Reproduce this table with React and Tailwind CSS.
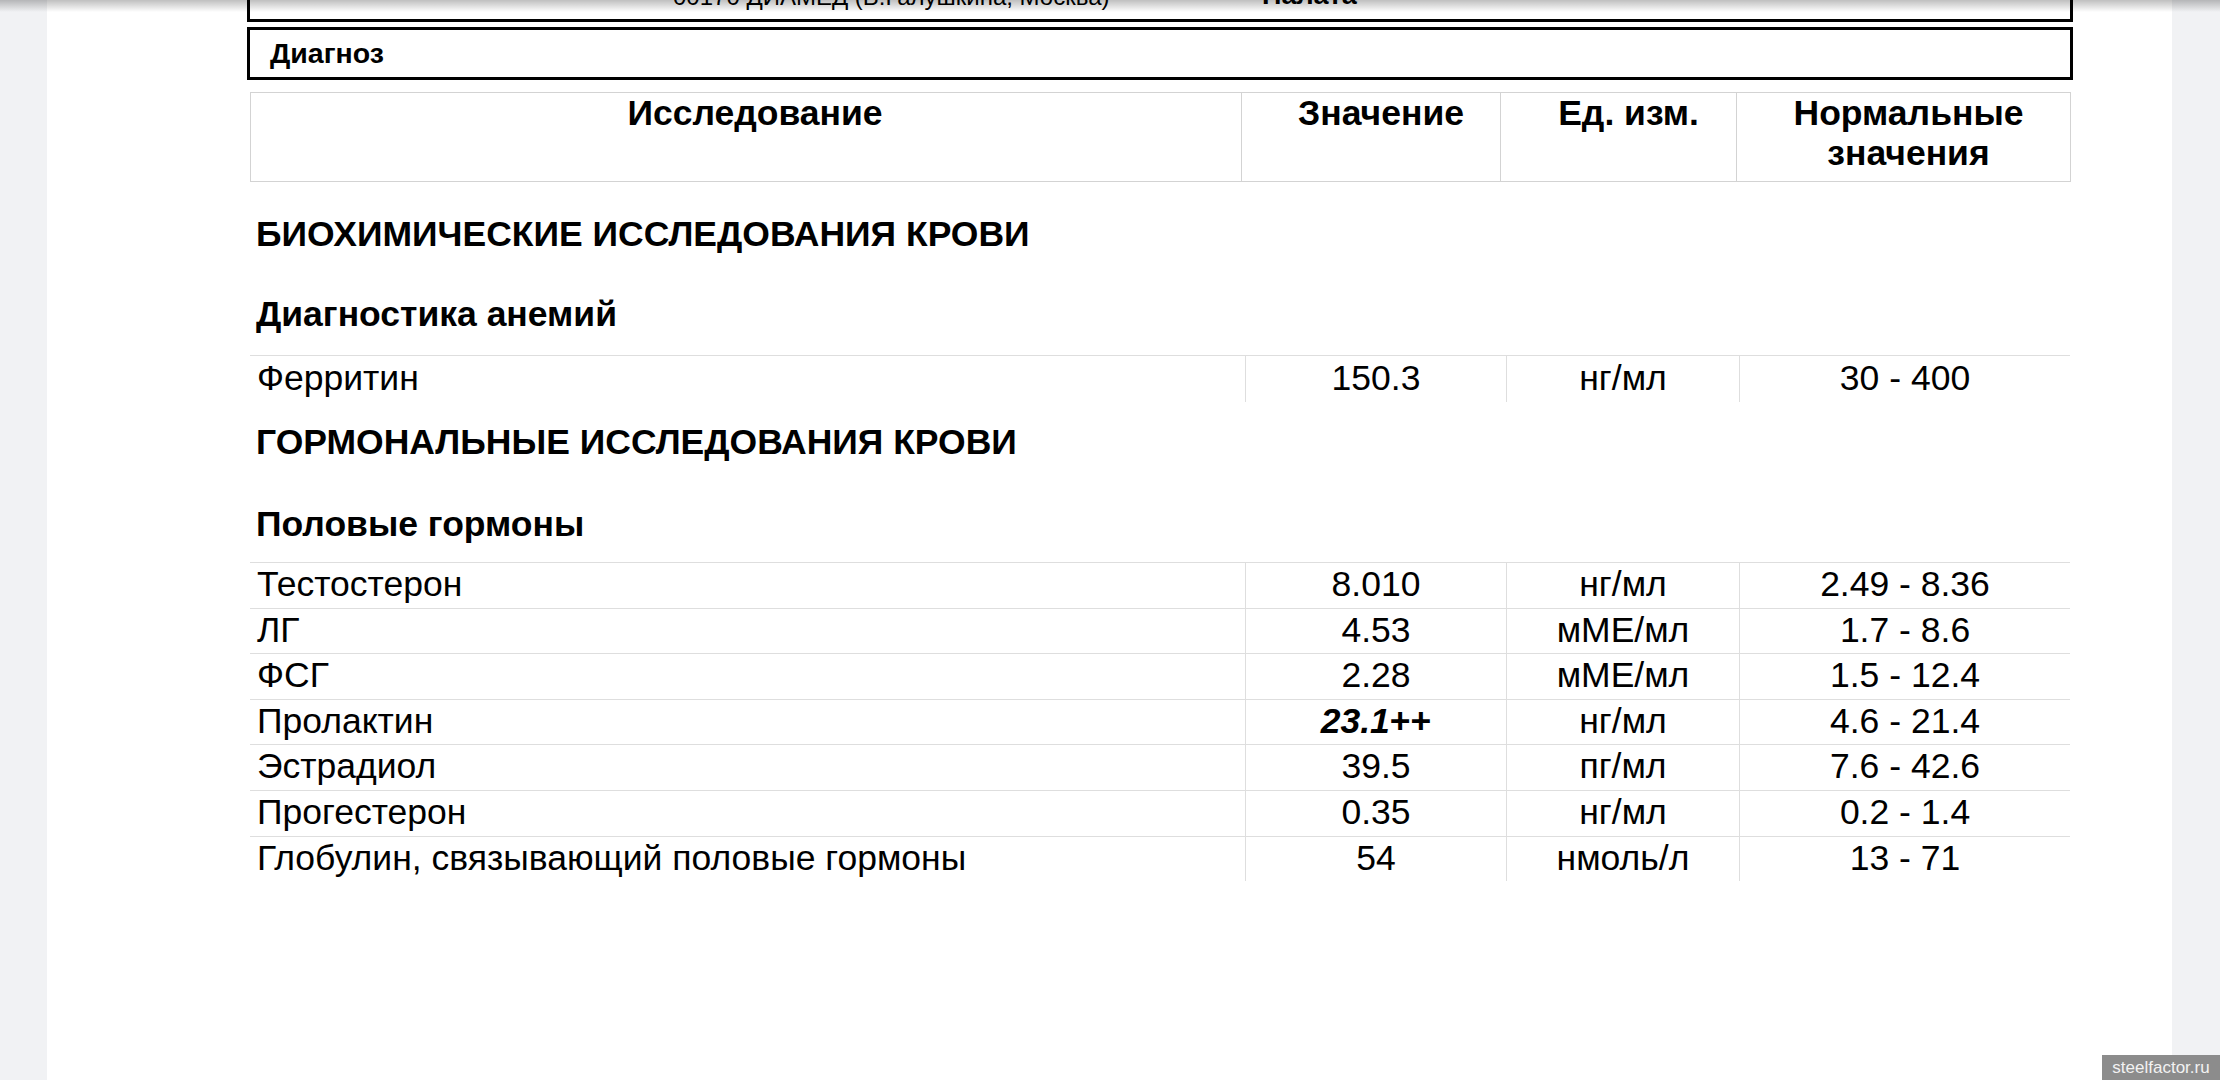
import React from 'react'

const FONT = "font-['Liberation_Sans',Arial,sans-serif]"

const anemia = [
  { name: 'Ферритин', value: '150.3', unit: 'нг/мл', norm: '30 - 400' },
]

const hormones = [
  { name: 'Тестостерон', value: '8.010', unit: 'нг/мл', norm: '2.49 - 8.36', h: 'h-[46px]' },
  { name: 'ЛГ', value: '4.53', unit: 'мМЕ/мл', norm: '1.7 - 8.6', h: 'h-[45px]' },
  { name: 'ФСГ', value: '2.28', unit: 'мМЕ/мл', norm: '1.5 - 12.4', h: 'h-[46px]' },
  { name: 'Пролактин', value: '23.1', flag: '++', unit: 'нг/мл', norm: '4.6 - 21.4', h: 'h-[45px]' },
  { name: 'Эстрадиол', value: '39.5', unit: 'пг/мл', norm: '7.6 - 42.6', h: 'h-[46px]' },
  { name: 'Прогестерон', value: '0.35', unit: 'нг/мл', norm: '0.2 - 1.4', h: 'h-[46px]' },
  { name: 'Глобулин, связывающий половые гормоны', value: '54', unit: 'нмоль/л', norm: '13 - 71', h: 'h-[45px]' },
]

function Row({ r, h = 'h-[47px]' }) {
  return (
    <div className={`flex w-[1820px] ml-[3px] border-t border-[#dedede] text-[35.5px] leading-[40px] text-black ${h}`}>
      <div className="w-[995px] flex items-center pl-[7px] pb-[3px]">{r.name}</div>
      <div className="w-[261px] border-l border-[#dedede] flex items-center justify-center pb-[3px]">
        {r.flag ? (
          <span className="font-bold">
            <span className="italic">{r.value}</span>{r.flag}
          </span>
        ) : r.value}
      </div>
      <div className="w-[233px] border-l border-[#dedede] flex items-center justify-center pb-[3px]">{r.unit}</div>
      <div className="w-[331px] border-l border-[#dedede] flex items-center justify-center pb-[3px]">{r.norm}</div>
    </div>
  )
}

function Heading({ children, className = '' }) {
  return (
    <div className={`h-[60px] flex items-center pl-[9px] font-bold text-black text-[35.5px] leading-[40px] ${className}`}>
      {children}
    </div>
  )
}

export default function App() {
  return (
    <div className={`relative w-[2220px] h-[1080px] overflow-hidden bg-[#f1f2f4] flex ${FONT}`}>
      <div className="w-[47px] shrink-0" />
      <div className="w-[2125px] shrink-0 h-full bg-white">
        <div className="ml-[200px] w-[1826px]">
          {/* top box, mostly scrolled off */}
          <div className="-mt-[40px] h-[62px] border-[3px] border-black flex items-end pb-[10px] text-[24px] leading-none">
            <span className="pl-[423px] w-[1012px] shrink-0">00170 ДИАМЕД (В.Галушкина, Москва)</span>
            <span className="font-bold text-[27px]">Палата</span>
          </div>

          <div className="mt-[5px] h-[53px] border-[3px] border-black flex items-center pl-[20px] font-bold text-[28.5px]">
            Диагноз
          </div>

          {/* table header */}
          <div className="mt-[12px] ml-[3px] w-[1821px] h-[90px] border border-[#d3d3d3] flex font-bold text-[35.5px] leading-[40px] text-black">
            <div className="w-[990px] text-center pl-[18px]">Исследование</div>
            <div className="w-[259px] border-l border-[#d3d3d3] text-center pl-[20px]">Значение</div>
            <div className="w-[236px] border-l border-[#d3d3d3] text-center pl-[20px]">Ед. изм.</div>
            <div className="flex-1 border-l border-[#d3d3d3] text-center pl-[10px]">Нормальные<br />значения</div>
          </div>

          <Heading className="mt-[22px]">БИОХИМИЧЕСКИЕ ИССЛЕДОВАНИЯ КРОВИ</Heading>
          <Heading className="mt-[20px]">Диагностика анемий</Heading>
          <div className="mt-[11px]">
            {anemia.map(r => <Row key={r.name} r={r} />)}
          </div>

          <Heading className="mt-[10px]">ГОРМОНАЛЬНЫЕ ИССЛЕДОВАНИЯ КРОВИ</Heading>
          <Heading className="mt-[22px]">Половые гормоны</Heading>
          <div className="mt-[8px]">
            {hormones.map(r => <Row key={r.name} r={r} h={r.h} />)}
          </div>
        </div>
      </div>
      <div className="flex-1" />

      {/* viewer toolbar shadow */}
      <div className="absolute top-0 left-0 right-0 h-[12px] bg-linear-to-b from-black/25 to-transparent" />

      {/* watermark */}
      <div className="absolute right-0 bottom-0 w-[118px] h-[25px] bg-[#8c8c8c] text-[#f2f2f2] text-[17px] leading-[25px] text-center">
        steelfactor.ru
      </div>
    </div>
  )
}
